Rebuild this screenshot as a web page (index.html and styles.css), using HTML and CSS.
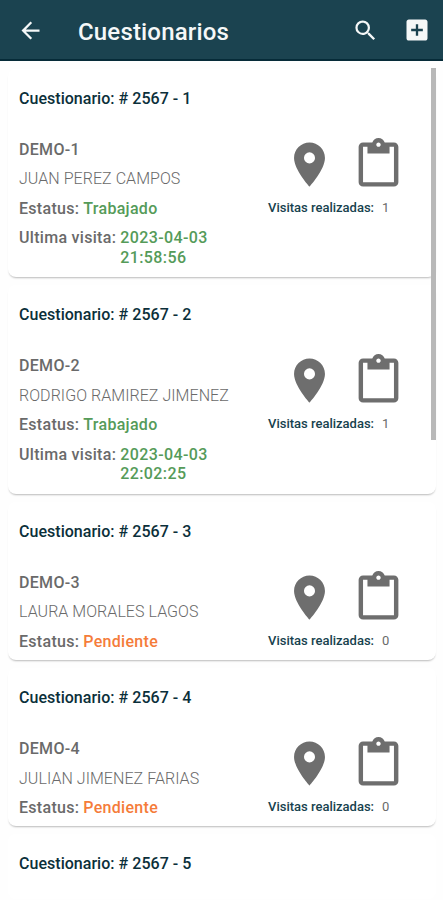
FILE: index.html
```
<!DOCTYPE html>
<html lang="es">
<head>
    <title>Cuestionarios</title>
    <meta charset="UTF-8">
    <meta name="viewport" content="width=device-width, initial-scale=1.0">
    <link rel="stylesheet" href="styles.css">
</head>
<body>
    <svg class="symbols">
        <symbol id="pin" viewBox="0 0 24 24">
            <path d="M12 2C8.13 2 5 5.13 5 9c0 5.25 7 13 7 13s7-7.75 7-13c0-3.87-3.13-7-7-7zm0 9.5a2.5 2.5 0 0 1 0-5 2.5 2.5 0 0 1 0 5z"/>
        </symbol>
        <symbol id="clipboard" viewBox="0 0 24 24">
            <path d="M19 2h-4.18C14.4.84 13.3 0 12 0c-1.3 0-2.4.84-2.82 2H5c-1.1 0-2 .9-2 2v16c0 1.1.9 2 2 2h14c1.1 0 2-.9 2-2V4c0-1.1-.9-2-2-2zm-7 0c.55 0 1 .45 1 1s-.45 1-1 1-1-.45-1-1 .45-1 1-1zm7 18H5V4h2v3h10V4h2v16z"/>
        </symbol>
    </svg>

    <header class="header">
        <svg class="icon-back" viewBox="0 0 24 24"><path d="M20 11H7.83l5.59-5.59L12 4l-8 8 8 8 1.41-1.41L7.83 13H20v-2z"/></svg>
        <h1>Cuestionarios</h1>
        <svg class="icon-search" viewBox="0 0 24 24"><path d="M15.5 14h-.79l-.28-.27A6.47 6.47 0 0 0 16 9.5 6.5 6.5 0 1 0 9.5 16c1.61 0 3.09-.59 4.23-1.57l.27.28v.79l5 4.99L20.49 19l-4.99-5zm-6 0C7.01 14 5 11.99 5 9.5S7.01 5 9.5 5 14 7.01 14 9.5 11.99 14 9.5 14z"/></svg>
        <svg class="icon-add" viewBox="0 0 24 24"><path d="M19 3H5c-1.11 0-2 .9-2 2v14c0 1.1.89 2 2 2h14c1.1 0 2-.9 2-2V5c0-1.1-.9-2-2-2zm-2 10h-4v4h-2v-4H7v-2h4V7h2v4h4v2z"/></svg>
    </header>

    <main class="list">
        <div class="card">
            <h2>Cuestionario: # 2567 - 1</h2>
            <div class="card-body">
                <div class="info">
                    <div class="code">DEMO-1</div>
                    <div class="name">JUAN PEREZ CAMPOS</div>
                    <div class="row status">Estatus: <span class="done">Trabajado</span></div>
                    <div class="row visit">Ultima visita: <span class="done">2023-04-03<br>21:58:56</span></div>
                </div>
                <div class="side">
                    <div class="actions">
                        <svg><use href="#pin"/></svg>
                        <svg><use href="#clipboard"/></svg>
                    </div>
                    <div class="visits"><b>Visitas realizadas:</b><span>1</span></div>
                </div>
            </div>
        </div>

        <div class="card">
            <h2>Cuestionario: # 2567 - 2</h2>
            <div class="card-body">
                <div class="info">
                    <div class="code">DEMO-2</div>
                    <div class="name">RODRIGO RAMIREZ JIMENEZ</div>
                    <div class="row status">Estatus: <span class="done">Trabajado</span></div>
                    <div class="row visit">Ultima visita: <span class="done">2023-04-03<br>22:02:25</span></div>
                </div>
                <div class="side">
                    <div class="actions">
                        <svg><use href="#pin"/></svg>
                        <svg><use href="#clipboard"/></svg>
                    </div>
                    <div class="visits"><b>Visitas realizadas:</b><span>1</span></div>
                </div>
            </div>
        </div>

        <div class="card short">
            <h2>Cuestionario: # 2567 - 3</h2>
            <div class="card-body">
                <div class="info">
                    <div class="code">DEMO-3</div>
                    <div class="name">LAURA MORALES LAGOS</div>
                    <div class="row status">Estatus: <span class="pending">Pendiente</span></div>
                </div>
                <div class="side">
                    <div class="actions">
                        <svg><use href="#pin"/></svg>
                        <svg><use href="#clipboard"/></svg>
                    </div>
                    <div class="visits"><b>Visitas realizadas:</b><span>0</span></div>
                </div>
            </div>
        </div>

        <div class="card short">
            <h2>Cuestionario: # 2567 - 4</h2>
            <div class="card-body">
                <div class="info">
                    <div class="code">DEMO-4</div>
                    <div class="name">JULIAN JIMENEZ FARIAS</div>
                    <div class="row status">Estatus: <span class="pending">Pendiente</span></div>
                </div>
                <div class="side">
                    <div class="actions">
                        <svg><use href="#pin"/></svg>
                        <svg><use href="#clipboard"/></svg>
                    </div>
                    <div class="visits"><b>Visitas realizadas:</b><span>0</span></div>
                </div>
            </div>
        </div>

        <div class="card last">
            <h2>Cuestionario: # 2567 - 5</h2>
        </div>
        <div class="scrollbar"></div>
    </main>
</body>
</html>
```

FILE: styles.css
```
* {
    box-sizing: border-box;
}
body {
    font-family: Roboto, "Liberation Sans", sans-serif;
    margin: 0;
    background-color: #fefefe;
    color: #6a6a6a;
}
.symbols {
    display: none;
}
.header {
    display: flex;
    align-items: center;
    height: 61px;
    padding: 2px 12px 0 17px;
    background-color: #1b4350;
    border-bottom: 2px solid #062b38;
    fill: #f5f8f8;
}
.header h1 {
    flex: 1;
    margin: 2px 0 0 34px;
    font-size: 24px;
    font-weight: 500;
    letter-spacing: 0.17px;
    color: #f5f8f8;
}
.icon-back {
    width: 27px;
    height: 27px;
}
.icon-search {
    width: 27px;
    height: 27px;
    margin-right: 24px;
}
.icon-add {
    width: 28px;
    height: 28px;
    margin-top: -2px;
}
.list {
    position: relative;
    padding: 7.5px 7px 0 8px;
}
.card {
    height: 208.5px;
    margin-bottom: 8px;
    padding: 20px 11px 0;
    background-color: #ffffff;
    border-radius: 8px;
    box-shadow: 0 2px 2px -1px rgba(0, 0, 0, 0.27);
}
.card.short {
    height: 158.3px;
}
.card.last {
    height: 65px;
    margin-bottom: 0;
    box-shadow: none;
}
.card h2 {
    margin: 0 0 31.8px;
    font-size: 16px;
    font-weight: 500;
    line-height: 19.5px;
    letter-spacing: 0.03px;
    color: #0b2f3a;
}
.card-body {
    display: flex;
    justify-content: space-between;
}
.info {
    display: flex;
    flex-direction: column;
    gap: 10px;
    font-size: 16px;
    line-height: 19.5px;
    white-space: nowrap;
}
.code,
.row {
    font-weight: 500;
    letter-spacing: 0.3px;
}
.name {
    font-weight: 300;
    letter-spacing: 0.05px;
}
.row {
    display: flex;
    gap: 4px;
}
.done {
    color: #559b59;
}
.visit .done {
    letter-spacing: 0.4px;
}
.pending {
    color: #f57c3a;
}
.side {
    width: 157px;
    margin-top: -2px;
}
.actions {
    display: flex;
    gap: 16px;
    padding-left: 15px;
}
.actions svg {
    width: 53px;
    height: 53px;
    fill: #6e6e6e;
}
.visits {
    display: flex;
    gap: 8px;
    margin-top: 9px;
    font-size: 13px;
    line-height: 16px;
}
.visits b {
    font-weight: 500;
    color: #17424e;
}
.scrollbar {
    position: absolute;
    top: 7px;
    right: 7px;
    width: 5px;
    height: 372px;
    background-color: #b8b8b8;
}
```
